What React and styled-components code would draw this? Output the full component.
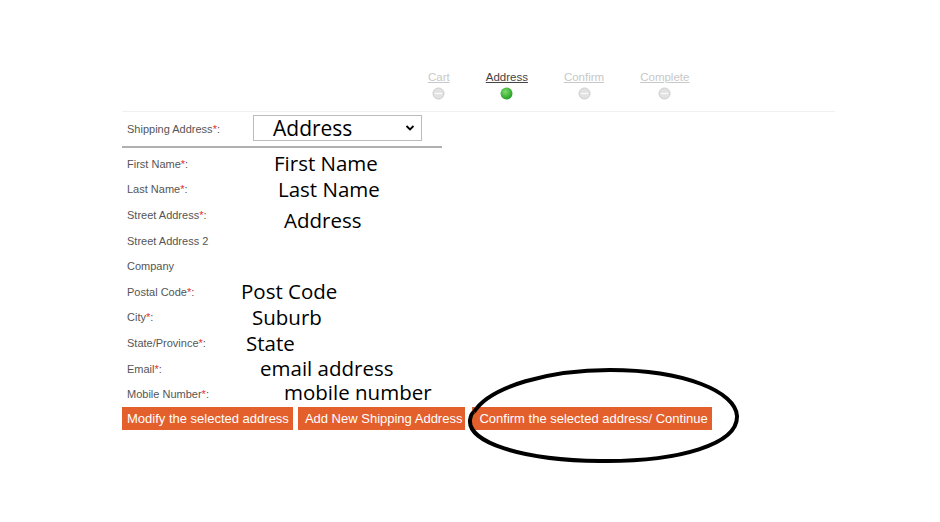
import React from "react";
import styled, { createGlobalStyle } from "styled-components";

const Global = createGlobalStyle`
  html, body { margin: 0; padding: 0; background: #fff; }
  body { font-family: "Liberation Sans", Arial, sans-serif; }
`;

const Page = styled.div`
  position: relative;
  width: 940px;
  height: 522px;
  padding: 70px 105px 0 122px;
  box-sizing: border-box;
`;

const Steps = styled.div`
  display: flex;
  gap: 36px;
  padding-left: 306px;
  height: 41px;
  border-bottom: 1px solid #f0f0f0;
`;

const Step = styled.div`
  display: flex;
  flex-direction: column;
  align-items: center;
  gap: 3px;
`;

const StepLabel = styled.span`
  font-size: 11.5px;
  line-height: 14px;
  color: ${(p) => (p.$active ? "#444" : "#c8c8c8")};
  text-decoration: underline;
`;

const Form = styled.div`
  width: 320px;
  padding-top: 3px;
`;

const ShipRow = styled.div`
  display: flex;
  align-items: center;
  height: 27px;
  padding-left: 5px;
  padding-bottom: 4px;
  border-bottom: 2px solid #b0b0b0;
`;

const Label = styled.span`
  font-size: 11px;
  color: #555;
  width: ${(p) => p.$w || 108}px;
  flex: none;
`;

const Req = styled.span`
  color: #e23030;
`;

const SelectBox = styled.div`
  width: 169px;
  height: 26px;
  border: 1px solid #bbb;
  box-sizing: border-box;
  display: flex;
  align-items: center;
  justify-content: space-between;
  padding: 0 6px 0 19px;
  margin-top: -2px;
  font-family: "Open Sans", Lato, sans-serif;
  font-size: 21px;
  line-height: 24px;
  color: #000;
`;

const Rows = styled.div`
  display: grid;
  grid-auto-rows: 25.6px;
  padding-top: 3px;
`;

const Row = styled.div`
  display: flex;
  align-items: center;
  padding-left: 5px;
`;

const Value = styled.span`
  font-family: "Open Sans", Lato, sans-serif;
  font-size: 20.5px;
  line-height: 18px;
  color: #000;
  white-space: nowrap;
  margin-left: ${(p) => p.$x}px;
  transform: translateY(${(p) => p.$y || 0}px);
`;

const Buttons = styled.div`
  display: flex;
  gap: 5px;
`;

const Button = styled.button`
  height: 23px;
  border: none;
  background: #e35f2c;
  color: #fff;
  font-family: "Liberation Sans", Arial, sans-serif;
  font-size: 13px;
  padding: 0 ${(p) => p.$pr ?? 6}px 0 ${(p) => p.$pl ?? 6}px;
  margin-left: ${(p) => p.$ml || 0}px;
  white-space: nowrap;
  cursor: pointer;
`;

const Ellipse = styled.svg`
  position: absolute;
  left: 460px;
  top: 364px;
  pointer-events: none;
`;

const Dot = ({ active }) => (
  <svg width="13" height="13" viewBox="0 0 13 13">
    <defs>
      <radialGradient id="g" cx="40%" cy="35%" r="70%">
        <stop offset="0%" stopColor="#7ddc6a" />
        <stop offset="100%" stopColor="#1f9a23" />
      </radialGradient>
    </defs>
    {active ? (
      <circle cx="6.5" cy="6.5" r="6" fill="url(#g)" />
    ) : (
      <>
        <circle cx="6.5" cy="6.5" r="5.5" fill="#e2e2e2" stroke="#cdcdcd" strokeWidth="1" />
        <line x1="2.8" y1="6.5" x2="10.2" y2="6.5" stroke="#fafafa" strokeWidth="1.3" />
      </>
    )}
  </svg>
);

const steps = [
  { name: "Cart" },
  { name: "Address", active: true },
  { name: "Confirm" },
  { name: "Complete" },
];

const fields = [
  { label: "First Name", req: true, value: "First Name", x: 39, y: -1 },
  { label: "Last Name", req: true, value: "Last Name", x: 43, y: 0 },
  { label: "Street Address", req: true, value: "Address", x: 49, y: 5 },
  { label: "Street Address 2" },
  { label: "Company" },
  { label: "Postal Code", req: true, value: "Post Code", x: 6, y: -1 },
  { label: "City", req: true, value: "Suburb", x: 17, y: 0 },
  { label: "State/Province", req: true, value: "State", x: 11, y: 0 },
  { label: "Email", req: true, value: "email address", x: 25, y: -1 },
  { label: "Mobile Number", req: true, value: "mobile number", x: 49, y: -2 },
];

export default function App() {
  return (
    <>
      <Global />
      <Page>
        <Steps>
          {steps.map((s) => (
            <Step key={s.name}>
              <StepLabel $active={s.active}>{s.name}</StepLabel>
              <Dot active={s.active} />
            </Step>
          ))}
        </Steps>
        <Form>
          <ShipRow>
            <Label $w={126}>
              Shipping Address<Req>*</Req>:
            </Label>
            <SelectBox>
              <span>Address</span>
              <svg width="10" height="8" viewBox="0 0 10 8">
                <path d="M1.5 2 L5 5.5 L8.5 2" fill="none" stroke="#000" strokeWidth="1.8" />
              </svg>
            </SelectBox>
          </ShipRow>
          <Rows>
            {fields.map((f) => (
              <Row key={f.label}>
                <Label>
                  {f.label}
                  {f.req && (
                    <>
                      <Req>*</Req>:
                    </>
                  )}
                </Label>
                {f.value && (
                  <Value $x={f.x} $y={f.y}>
                    {f.value}
                  </Value>
                )}
              </Row>
            ))}
          </Rows>
        </Form>
        <Buttons>
          <Button $pl={5} $pr={4}>Modify the selected address</Button>
          <Button $pl={7} $pr={3}>Add New Shipping Address</Button>
          <Button $pl={7} $pr={4} $ml={2}>Confirm the selected address/ Continue</Button>
        </Buttons>
        <Ellipse width="290" height="105" viewBox="0 0 290 105">
          <path
            d="M14 48 C 30 22, 90 6, 150 6 C 225 6, 276 28, 277 52 C 278 80, 220 98, 140 97 C 60 96, 8 78, 10 56 C 11 50, 12 49, 14 48"
            fill="none"
            stroke="#000"
            strokeWidth="4"
          />
        </Ellipse>
      </Page>
    </>
  );
}
